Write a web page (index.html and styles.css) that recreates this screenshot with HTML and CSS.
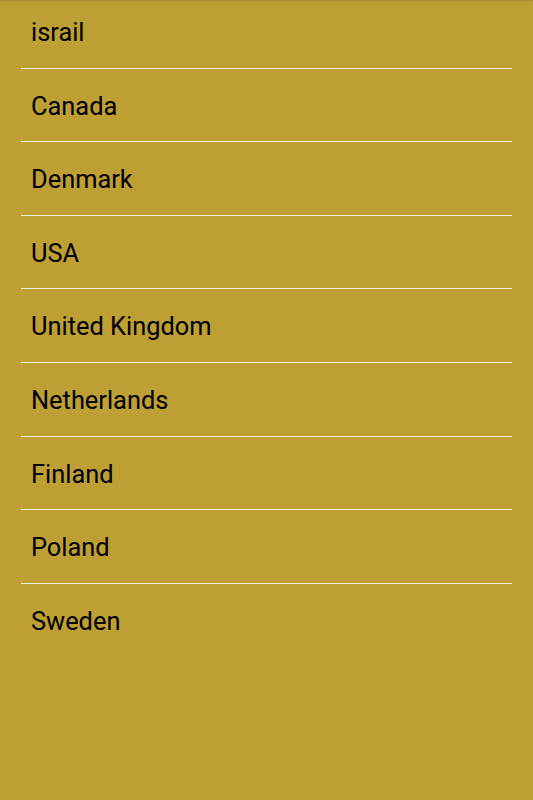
FILE: index.html
```html
<!DOCTYPE html>
<html>
<head>
<meta charset="utf-8">
<link rel="stylesheet" href="styles.css">
</head>
<body>
<ul class="list">
  <li class="item">israil</li>
  <li class="item">Canada</li>
  <li class="item">Denmark</li>
  <li class="item">USA</li>
  <li class="item">United Kingdom</li>
  <li class="item">Netherlands</li>
  <li class="item">Finland</li>
  <li class="item">Poland</li>
  <li class="item">Sweden</li>
</ul>
</body>
</html>
```
FILE: styles.css
```css
html, body {
  margin: 0;
  padding: 0;
  height: 100%;
}
body {
  background: #bd9f33;
  font-family: Roboto, "Liberation Sans", sans-serif;
  overflow: hidden;
  box-shadow: inset 0 2px 2px -1px rgba(0,0,0,0.12);
}
.list {
  list-style: none;
  margin: -5px 21px 0 21px;
  padding: 0;
}
.item {
  height: 72.6px;
  line-height: 75px;
  padding-left: 10px;
  font-size: 25.4px;
  color: #000;
  border-bottom: 1px solid #f2eee0;
}
.item:last-child {
  border-bottom: none;
}
```
